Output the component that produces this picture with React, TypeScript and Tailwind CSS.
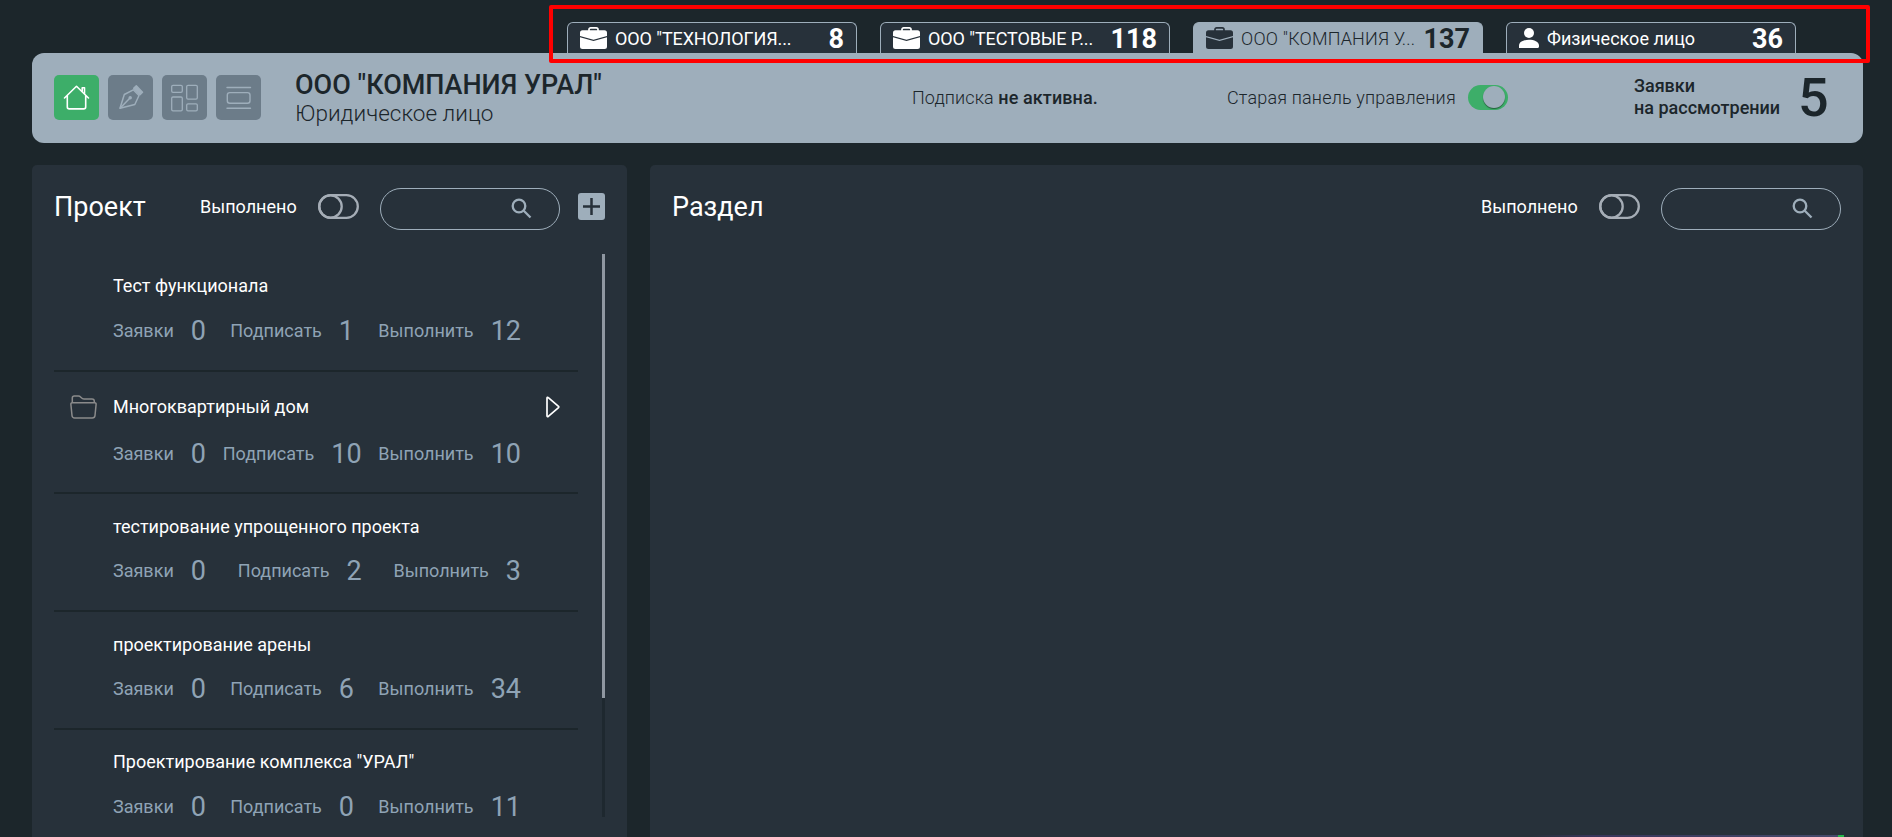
import React from "react";

type Tab = { name: string; count: number; kind: "company" | "person"; active?: boolean };
type Project = { title: string; requests: number; sign: number; todo: number; folder?: boolean; height: string; stats: string };

const tabs: Tab[] = [
  { name: 'ООО "ТЕХНОЛОГИЯ...', count: 8, kind: "company" },
  { name: 'ООО "ТЕСТОВЫЕ Р...', count: 118, kind: "company" },
  { name: 'ООО "КОМПАНИЯ У...', count: 137, kind: "company", active: true },
  { name: "Физическое лицо", count: 36, kind: "person" },
];

const projects: Project[] = [
  { title: "Тест функционала", requests: 0, sign: 1, todo: 12, height: "h-[118px] pt-[17px]", stats: "mt-[13px]" },
  { title: "Многоквартирный дом", requests: 0, sign: 10, todo: 10, folder: true, height: "h-[122px] pt-[20px]", stats: "mt-[15px]" },
  { title: "тестирование упрощенного проекта", requests: 0, sign: 2, todo: 3, height: "h-[118px] pt-[18px]", stats: "mt-[12px]" },
  { title: "проектирование арены", requests: 0, sign: 6, todo: 34, height: "h-[118px] pt-[18px]", stats: "mt-[12px]" },
  { title: 'Проектирование комплекса "УРАЛ"', requests: 0, sign: 0, todo: 11, height: "h-[107px] pt-[17px]", stats: "mt-[13px]" },
];

function Briefcase() {
  return (
    <svg className="h-[22px] w-[27px] shrink-0" viewBox="0 0 27 22">
      <path d="M9 4V2.6C9 1.5 9.7.9 10.7.9h5.6c1 0 1.7.6 1.7 1.7V4" fill="none" stroke="currentColor" strokeWidth="1.7" />
      <path fill="currentColor" d="M2.5 3.3h22A2.5 2.5 0 0 1 27 5.800v3.300L13.500 12.800 0 9.100V5.800a2.500 2.500 0 0 1 2.500-2.500Z" />
      <path fill="currentColor" d="M0 10.300 13.500 14 27 10.300v9.200a2.500 2.500 0 0 1-2.500 2.500h-22A2.500 2.500 0 0 1 0 19.500Z" />
    </svg>
  );
}

function Person() {
  return (
    <svg className="h-[20px] w-[20px] shrink-0" viewBox="0 0 20 20" fill="currentColor">
      <circle cx="10" cy="5" r="5" />
      <path d="M0 20v-2.500C0 13.800 5 11.800 10 11.800s10 2 10 5.700V18.500c0 .9-.6 1.500-1.500 1.500Z" />
    </svg>
  );
}

function HomeIcon() {
  return (
    <svg className="size-[45px]" viewBox="0 0 45 45" fill="none" stroke="#fff" strokeWidth="1.600" strokeLinecap="round" strokeLinejoin="round">
      <path d="M10.500 23 22.500 11.300 34.500 23M13.300 20.500V32c0 1.200.7 1.900 1.900 1.900h14.600c1.200 0 1.900-.7 1.900-1.900V20.500" />
      <path d="M28.200 16.200V12.700h2.300v5.900" />
    </svg>
  );
}

function PenIcon() {
  return (
    <svg className="size-[45px]" viewBox="0 0 45 45" fill="none" stroke="#9eaebb" strokeWidth="1.500" strokeLinejoin="round" strokeLinecap="round">
      <path d="M12 33.200 16.300 19.500 25.300 14.800 31 20.500 26.800 29.500Z" />
      <path d="M12.300 32.900 21.500 23.500" />
      <circle cx="22.200" cy="22.800" r="1" fill="#9eaebb" />
      <path d="M25.700 13.200 28.300 10.800 34.500 17.200 32 19.600Z" fill="#9eaebb" />
    </svg>
  );
}

function GridIcon() {
  return (
    <svg className="size-[45px]" viewBox="0 0 45 45" fill="none" stroke="#9eaebb" strokeWidth="1.300">
      <rect x="9.700" y="10.300" width="10.600" height="7" rx="1.300" />
      <rect x="24.700" y="10.300" width="10.600" height="13.800" rx="1.300" />
      <rect x="9.700" y="22" width="10.600" height="13.800" rx="1.300" />
      <rect x="24.700" y="28.800" width="10.600" height="7" rx="1.300" />
    </svg>
  );
}

function ListIcon() {
  return (
    <svg className="size-[45px]" viewBox="0 0 45 45" fill="none" stroke="#9eaebb" strokeWidth="1.400" strokeLinecap="round">
      <path d="M11 12.500h23.500M11 33.300h23.500" />
      <rect x="11.300" y="17.600" width="22.700" height="10.700" rx="2.500" />
    </svg>
  );
}

function OffToggle() {
  return (
    <svg className="h-[25px] w-[41px] shrink-0" viewBox="0 0 41 25" fill="none" stroke="#a5adb6" strokeWidth="2.300">
      <rect x="1.200" y="1.200" width="38.600" height="22.600" rx="11.300" />
      <circle cx="12.500" cy="12.500" r="11.200" />
    </svg>
  );
}

function Search() {
  return (
    <div className="flex h-[42px] w-[180px] shrink-0 items-start justify-end rounded-[21px] border border-[#9eaebb] pt-[9px] pr-[27px]">
      <svg className="size-[21px]" viewBox="0 0 21 21" fill="none" stroke="#9eaebb" strokeWidth="2.300">
        <circle cx="8" cy="8" r="6.300" />
        <path d="m12.500 12.500 7 7" />
      </svg>
    </div>
  );
}

function Stat({ label, value }: { label: string; value: number }) {
  return (
    <div className="flex items-center gap-[17px]">
      <span className="pb-[2px] text-[18px]">{label}</span>
      <span className="text-[27px]">{value}</span>
    </div>
  );
}

export default function App() {
  return (
    <div className="relative flex h-[837px] w-full flex-col overflow-hidden bg-[#1c262b] pr-[29px] pl-[32px] font-['Roboto',sans-serif] text-white">
      <nav className="flex h-[53px] items-end gap-[23px] pl-[535px]">
        {tabs.map((tab) => (
          <div
            key={tab.name}
            className={
              "flex h-[31px] w-[290px] shrink-0 items-center rounded-t-[6px] border border-b-0 border-[#9eaebb] pr-[12px] pl-[12px] " +
              (tab.active ? "bg-[#9eaebb] text-[#27313a]" : "bg-[#27313a]")
            }
          >
            {tab.kind === "company" ? <Briefcase /> : <Person />}
            <span
              className={
                "flex-1 pt-[2px] pl-[8px] text-[18px] leading-[28px] whitespace-nowrap " +
                (tab.active ? "font-light tracking-[0.2px] text-[#1c262b]" : tab.kind === "company" ? "tracking-[-0.1px]" : "")
              }
            >
              {tab.name}
            </span>
            <span className={"pt-[2px] text-[27px] leading-[28px] font-bold " + (tab.active ? "text-[#1c262b]" : "")}>{tab.count}</span>
          </div>
        ))}
      </nav>

      <header className="flex h-[90px] shrink-0 items-center rounded-[12px] bg-[#9eaebb] pb-[2px] pl-[22px] text-[#1c262b]">
        <div className="flex gap-[9px]">
          <div className="rounded-[5px] bg-[#3dae69]"><HomeIcon /></div>
          <div className="rounded-[5px] bg-[#6c7c89]"><PenIcon /></div>
          <div className="rounded-[5px] bg-[#6c7c89]"><GridIcon /></div>
          <div className="rounded-[5px] bg-[#6c7c89]"><ListIcon /></div>
        </div>
        <div className="ml-[34px] w-[617px] pt-[4px] whitespace-nowrap">
          <div className="text-[27px] leading-[28px] font-medium">ООО "КОМПАНИЯ УРАЛ"</div>
          <div className="text-[22.500px] leading-[28px] font-light">Юридическое лицо</div>
        </div>
        <div className="w-[315px] text-[18px] font-light tracking-[0.100px] whitespace-nowrap">
          Подписка <span className="font-medium">не активна.</span>
        </div>
        <div className="flex w-[407px] items-center text-[18px] font-light whitespace-nowrap">
          <span className="w-[241px] tracking-[0.170px]">Старая панель управления</span>
          <span className="flex h-[25px] w-[40px] items-center justify-end rounded-full bg-[#3dae69] pr-[3px]">
            <span className="size-[22px] rounded-full bg-[#9eaebb] shadow-[0_1px_1px_rgba(0,0,0,0.45)]" />
          </span>
        </div>
        <div className="w-[164px] text-[18px] leading-[22px] font-medium whitespace-nowrap">
          Заявки
          <br />
          на рассмотрении
        </div>
        <div className="pt-[2px] text-[54px] leading-[54px] font-medium">5</div>
      </header>

      <main className="mt-[22px] flex flex-1 gap-[23px]">
        <section className="flex w-[595px] shrink-0 flex-col rounded-t-[5px] bg-[#27313a]">
          <div className="flex h-[84px] items-center pb-[2px] pl-[22px]">
            <h2 className="w-[146px] pt-[2px] text-[27px]">Проект</h2>
            <span className="w-[118px] text-[18px]">Выполнено</span>
            <OffToggle />
            <div className="pt-[6px] pl-[21px]"><Search /></div>
            <div className="ml-[18px] flex size-[27px] items-center justify-center rounded-[3px] bg-[#9eaebb]">
              <svg className="size-[17px]" viewBox="0 0 17 17" stroke="#27313a" strokeWidth="2.500">
                <path d="M0 8.500h17M8.500 0v17" />
              </svg>
            </div>
          </div>
          <div className="mt-[5px] flex">
            <ul className="ml-[22px] w-[524px]">
              {projects.map((p, i) => (
                <li key={p.title} className={p.height + (i < 4 ? " border-b-2 border-[#1c262b]" : "")}>
                  <div className="flex h-[28px] items-center">
                    <div className="w-[59px] pt-[2px] pl-[16px]">
                      {p.folder && (
                        <svg className="h-[24px] w-[27px]" viewBox="0 0 27 24" fill="none" stroke="#8b8b8b" strokeWidth="1.500" strokeLinejoin="round">
                          <path d="M2.300 8V3c0-1.300.8-2 2-2h4c1.200 0 1.700.3 2.500 1.200.9 1 1.700 1.900 3.200 1.900h8c1.500 0 2.300.8 2.300 2.200V8" />
                          <path d="M2.300 7.800h22.400c1.200 0 1.500.7 1.400 1.700l-1.100 11c-.2 1.700-1.100 2.500-2.700 2.500H4.700c-1.600 0-2.500-.8-2.700-2.500L.9 9.500c-.1-1 .2-1.700 1.400-1.700Z" />
                        </svg>
                      )}
                    </div>
                    <span className="flex-1 text-[18px]">{p.title}</span>
                    {p.folder && (
                      <svg className="mt-[2px] mr-[18px] h-[22px] w-[14px]" viewBox="0 0 14 22" fill="none" stroke="#fff" strokeWidth="1.700" strokeLinejoin="round">
                        <path d="M1 2.200v17.600c0 .9.700 1.100 1.300.5L12.500 11.600c.4-.4.4-.8 0-1.200L2.300 1.700C1.700 1.100 1 1.300 1 2.200Z" />
                      </svg>
                    )}
                  </div>
                  <div className={"ml-[59px] flex h-[38px] w-[408px] items-center justify-between text-[#8fa3b5] " + p.stats}>
                    <Stat label="Заявки" value={p.requests} />
                    <Stat label="Подписать" value={p.sign} />
                    <Stat label="Выполнить" value={p.todo} />
                  </div>
                </li>
              ))}
            </ul>
            <div className="ml-[24px] h-[563px] w-[3px] bg-[#1e282f]">
              <div className="h-[444px] bg-[#8f97a1]" />
            </div>
          </div>
        </section>

        <section className="flex-1 rounded-t-[5px] bg-[#27313a]">
          <div className="flex h-[84px] items-center pr-[22px] pb-[2px] pl-[22px]">
            <h2 className="flex-1 pt-[2px] text-[27px]">Раздел</h2>
            <span className="w-[118px] text-[18px]">Выполнено</span>
            <OffToggle />
            <div className="pt-[6px] pl-[21px]"><Search /></div>
          </div>
        </section>
      </main>

      <div className="absolute top-[5px] left-[549px] h-[58px] w-[1321px] rounded-[2px] border-4 border-[#ff0000]" />
      <div className="absolute top-[835px] left-[1530px] flex h-[2px] w-[314px]">
        <div className="flex-1 bg-linear-to-r from-[#27313a] via-[#38355a] via-20% to-[#454a6b]" />
        <div className="w-[6px] bg-[#27b84c]" />
      </div>
    </div>
  );
}
